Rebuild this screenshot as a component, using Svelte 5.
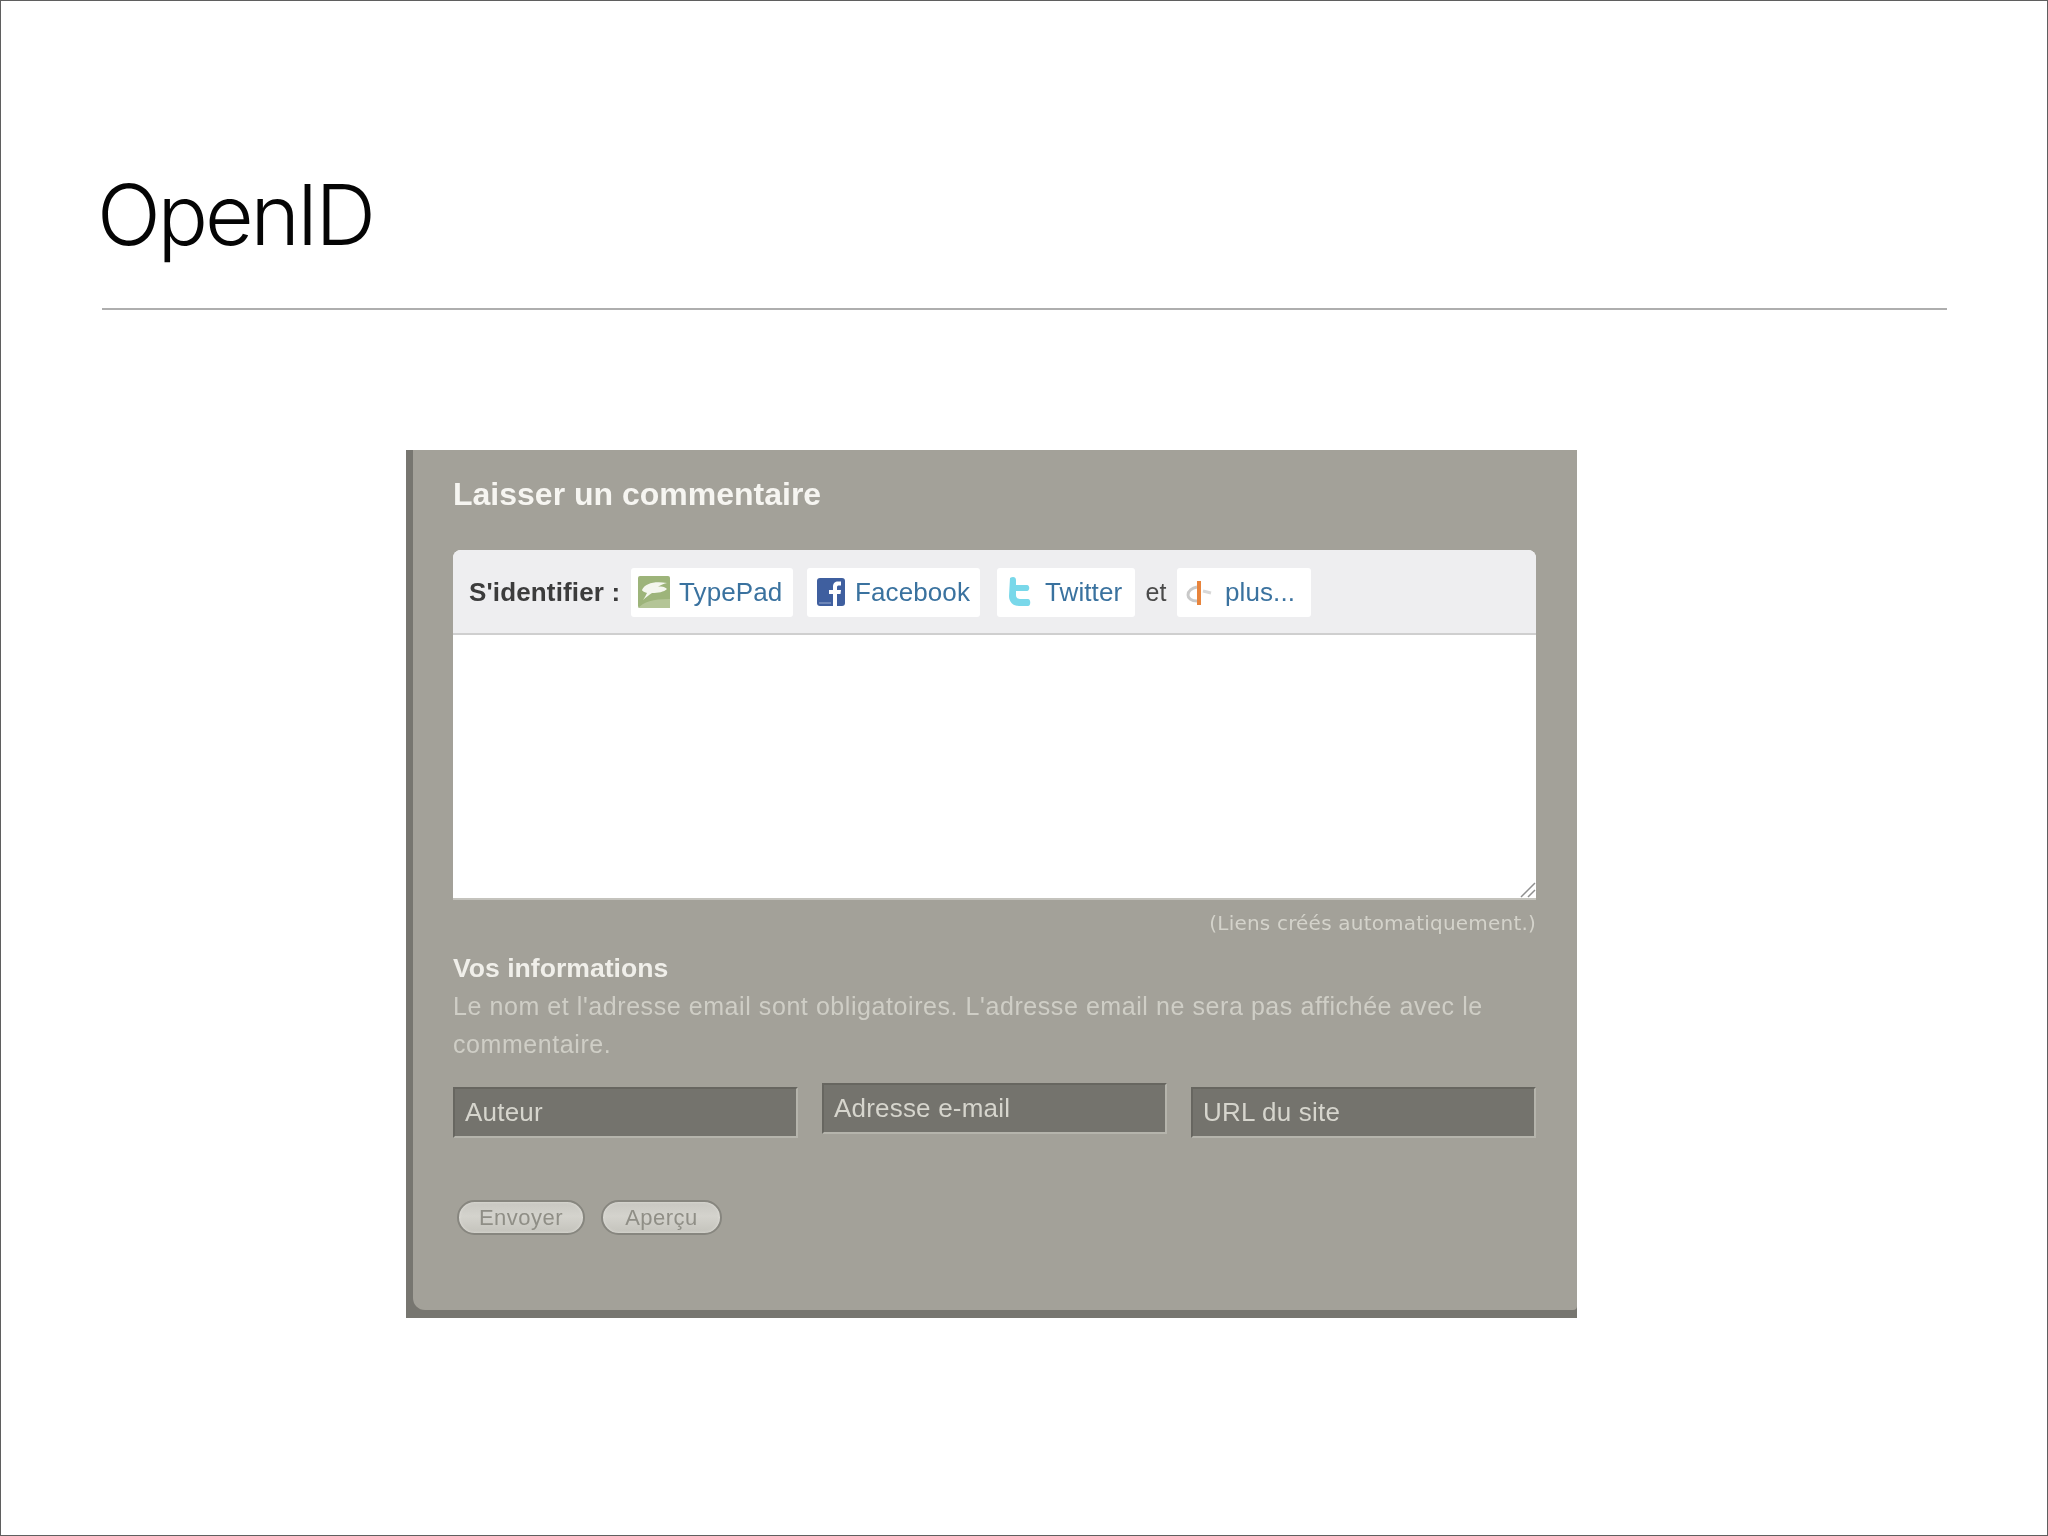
<script>
  const providers = [
    { name: "TypePad", icon: "typepad" },
    { name: "Facebook", icon: "facebook" },
    { name: "Twitter", icon: "twitter" }
  ];
</script>

<div class="slide">
  <h1 class="title">OpenID</h1>
  <div class="rule"></div>

  <section class="panel">
    <div class="panel-body">
      <h2 class="panel-title">Laisser un commentaire</h2>

      <div class="editor">
        <div class="toolbar">
          <strong class="signin">S'identifier :</strong>
          {#each providers as p}
            <span class="pill {p.icon}">
              {#if p.icon === "typepad"}
                <svg width="32" height="32" viewBox="0 0 32 32">
                  <rect width="32" height="32" rx="2" fill="#9db47a" />
                  <path d="M4 14c3-7 13-9 25-7-4 1-7 2-9 4 4-1 7 0 9 2-3 3-9 4-15 4-3 2-6 4-9 7 2-3 3-5 4-7-3-1-5-2-5-3z" fill="#f4f6ee" />
                  <path d="M0 32c6-6 14-9 32-9v9z" fill="#b4c597" />
                </svg>
              {:else if p.icon === "facebook"}
                <svg width="28" height="28" viewBox="0 0 28 28">
                  <rect width="28" height="28" rx="3" fill="#3f5f9f" />
                  <path d="M16 28V16h-4v-4h4V9c0-4 2-5.500 5-5.500h3v4h-2c-1.500 0-2 .5-2 2V12h4l-.5 4H20v12z" fill="#fff" />
                  <rect x="2" y="24" width="12" height="2" fill="#6d86b8" />
                </svg>
              {:else}
                <svg width="26" height="32" viewBox="0 0 26 32">
                  <path d="M3 2c3-2 6-1 6 2v5h11c3 0 3 6 0 6H9v4c0 3 2 4 5 4h7c3 0 3 7 0 7h-9C6 30 2 26 2 20z" fill="#79d8ea" />
                </svg>
              {/if}
              <span class="link">{p.name}</span>
            </span>
          {/each}
          <span class="and">et</span>
          <span class="pill more">
            <svg width="28" height="28" viewBox="0 0 28 28">
              <path d="M11 9C6 10 2 13 2 17c0 3 3 6 9 6" fill="none" stroke="#c9c9c9" stroke-width="3" />
              <path d="M17 13l8 2" fill="none" stroke="#d8d8d8" stroke-width="3" />
              <rect x="11" y="3" width="4" height="24" fill="#e8843c" />
            </svg>
            <span class="link">plus...</span>
          </span>
        </div>
        <div class="textarea">
          <svg class="grip" width="16" height="16" viewBox="0 0 16 16">
            <path d="M1 15L15 1M8 15l7-7" stroke="#8f8f8f" stroke-width="1.500" fill="none" />
          </svg>
        </div>
      </div>

      <p class="hint">(Liens créés automatiquement.)</p>

      <h3 class="info-title">Vos informations</h3>
      <p class="info">Le nom et l'adresse email sont obligatoires. L'adresse email ne sera pas affichée avec le commentaire.</p>

      <div class="fields">
        <div class="field">Auteur</div>
        <div class="field raised">Adresse e-mail</div>
        <div class="field">URL du site</div>
      </div>

      <div class="buttons">
        <button class="btn send">Envoyer</button>
        <button class="btn preview">Aperçu</button>
      </div>
    </div>
  </section>
</div>

<style>
  :global(body) {
    margin: 0;
    background: #fff;
  }

  .slide {
    box-sizing: border-box;
    width: 2048px;
    height: 1536px;
    border: 1px solid #5f5f5f;
    overflow: hidden;
    font-family: "Liberation Sans", Arial, sans-serif;
  }

  .title {
    margin: 164px 0 0 96px;
    font-family: Inter, "Liberation Sans", sans-serif;
    font-weight: 300;
    font-size: 84px;
    line-height: 100px;
    letter-spacing: -3.200px;
    color: #050505;
  }

  .rule {
    height: 2px;
    margin: 43px 100px 0 101px;
    background: #aeaeae;
  }

  .panel {
    width: 1171px;
    height: 868px;
    box-sizing: border-box;
    margin: 140px 0 0 405px;
    padding: 0 0 8px 7px;
    background: #777670;
    filter: blur(0.700px);
  }

  .panel-body {
    box-sizing: border-box;
    height: 100%;
    padding: 20px 41px 0 40px;
    background: #a3a199;
    border-bottom-left-radius: 12px;
    border-bottom-right-radius: 4px;
  }

  .panel-title {
    margin: 0;
    font-size: 32px;
    line-height: 48px;
    font-weight: 700;
    color: #f6f5f1;
  }

  .editor {
    margin-top: 32px;
    border-radius: 8px 8px 0 0;
    overflow: hidden;
    background: #fff;
    border-bottom: 2px solid #c4c3bd;
  }

  .toolbar {
    box-sizing: border-box;
    height: 85px;
    padding: 1px 0 0 16px;
    display: flex;
    align-items: center;
    background: #eeeef0;
    border-bottom: 2px solid #cfcfcf;
    font-size: 26px;
  }

  .signin {
    width: 162px;
    flex: none;
    font-size: 26px;
    letter-spacing: 0.150px;
    color: #3c3c3c;
  }

  .pill {
    box-sizing: border-box;
    height: 49px;
    display: flex;
    align-items: center;
    background: #fff;
    border-radius: 3px;
  }

  .typepad {
    width: 162px;
    padding-left: 7px;
    gap: 9px;
  }

  .facebook {
    width: 173px;
    margin-left: 14px;
    padding-left: 10px;
    gap: 10px;
  }

  .twitter {
    width: 138px;
    margin-left: 17px;
    padding-left: 10px;
    gap: 12px;
  }

  .more {
    width: 134px;
    padding-left: 9px;
    gap: 11px;
  }

  .link {
    color: #3a729f;
    font-size: 26px;
    letter-spacing: 0.100px;
  }

  .and {
    width: 42px;
    text-align: center;
    color: #4a4a4a;
    font-size: 25px;
  }

  .textarea {
    position: relative;
    height: 263px;
    background: #fff;
  }

  .grip {
    position: absolute;
    right: 0;
    bottom: 0;
  }

  .hint {
    margin: 9px 0 0;
    text-align: right;
    font-family: "DejaVu Sans", sans-serif;
    font-size: 20px;
    letter-spacing: 0.200px;
    line-height: 28px;
    color: #d4d3cb;
  }

  .info-title {
    margin: 15px 0 0;
    font-size: 26.600px;
    line-height: 32px;
    font-weight: 700;
    color: #f0efea;
  }

  .info {
    margin: 3px 0 0;
    font-size: 25px;
    line-height: 38px;
    letter-spacing: 0.570px;
    color: #cfcec6;
  }

  .fields {
    display: flex;
    justify-content: space-between;
    align-items: flex-start;
    margin-top: 20px;
  }

  .field {
    box-sizing: border-box;
    width: 345px;
    height: 51px;
    margin-top: 4px;
    padding-left: 10px;
    display: flex;
    align-items: center;
    background: #74736d;
    border-top: 2px solid #676660;
    border-left: 2px solid #676660;
    border-right: 2px solid #b5b4ac;
    border-bottom: 2px solid #b5b4ac;
    font-size: 26px;
    letter-spacing: 0.200px;
    color: #d6d5cd;
  }

  .raised {
    margin-top: 0;
  }

  .buttons {
    display: flex;
    gap: 16px;
    margin: 62px 0 0 4px;
  }

  .btn {
    box-sizing: border-box;
    height: 35px;
    padding: 0;
    border: 2px solid #87867f;
    border-radius: 18px;
    background: linear-gradient(#c8c7c1, #d4d3cd 45%, #c4c3bc);
    box-shadow: inset 0 0 3px #e6e5e0;
    font-family: "Liberation Sans", Arial, sans-serif;
    font-size: 22px;
    letter-spacing: 0.500px;
    color: #8f8e86;
  }

  .send {
    width: 128px;
  }

  .preview {
    width: 121px;
  }
</style>
